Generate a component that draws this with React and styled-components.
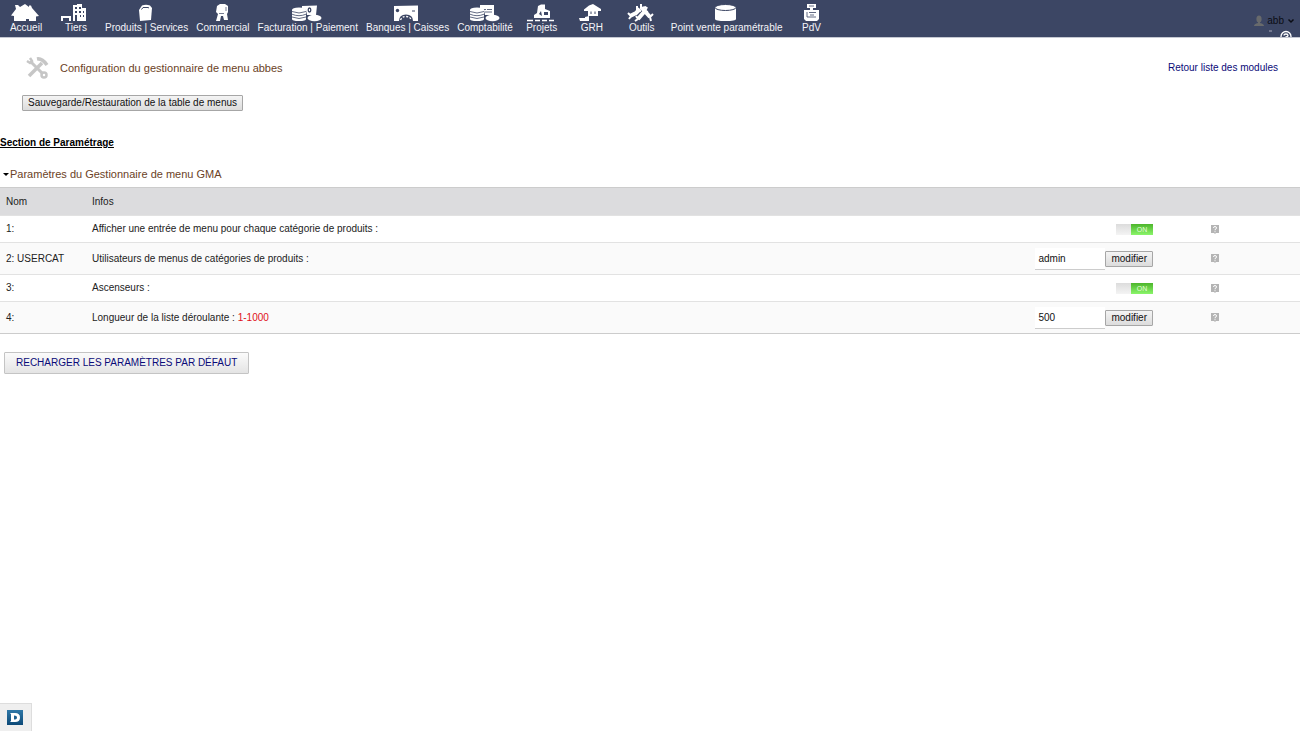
import React from "react";
import styled, { createGlobalStyle } from "styled-components";

const Global = createGlobalStyle`
  *, *::before, *::after { box-sizing: border-box; }
  body {
    margin: 0;
    background: #fff;
    color: #222;
    font: 10px/14px "Liberation Sans", Arial, sans-serif;
  }
  button, input { font: inherit; color: inherit; }
`;

const TopBar = styled.header`
  display: flex;
  justify-content: space-between;
  height: 38px;
  background: #3c4664;
  border-bottom: 1px solid #c5c8d2;
  overflow: hidden;
`;
const Nav = styled.nav`
  display: flex;
  padding: 3px 0 0 1px;
`;
const NavLink = styled.a`
  display: flex;
  flex-direction: column;
  align-items: center;
  min-width: 50px;
  padding: 0 4px;
  color: #f4f4f8;
  text-decoration: none;
  white-space: nowrap;
`;
const NavIcon = styled.svg`
  width: 30px;
  height: 18px;
  fill: #fff;
  overflow: visible;
`;
const Account = styled.div`
  display: flex;
  flex-direction: column;
  align-items: flex-end;
  padding: 14px 5px 0 0;
`;
const UserButton = styled.button`
  display: flex;
  align-items: center;
  gap: 3px;
  padding: 0;
  border: 0;
  background: none;
  color: #0b0d14;
`;
const HelpLine = styled.a`
  display: flex;
  padding: 2px 3px 0 0;
`;

const PageHead = styled.div`
  display: flex;
  align-items: center;
  justify-content: space-between;
  padding: 18px 22px 0 25px;
`;
const Title = styled.h1`
  display: flex;
  align-items: center;
  gap: 11px;
  margin: 0;
  font-size: 11px;
  font-weight: normal;
  color: #6b4226;
`;
const TextLink = styled.a`
  color: #0a0a78;
  text-decoration: none;
`;
const Actions = styled.div`
  padding: 15px 22px 0;
`;
const Button = styled.button`
  display: block;
  height: 16px;
  padding: 0 5px;
  border: 1px solid #a6a6a6;
  border-radius: 1px;
  background: linear-gradient(#f4f4f4, #dcdcdc);
  color: #111;
  line-height: 14px;
  white-space: nowrap;
`;
const Section = styled.h2`
  margin: 25px 0 0;
  font-size: 10px;
  color: #000;
  text-decoration: underline;
`;
const Details = styled.details`
  margin-top: 17px;
`;
const Summary = styled.summary`
  display: flex;
  align-items: center;
  gap: 1px;
  padding-left: 3px;
  font-size: 11px;
  color: #6b4226;
  list-style: none;
`;
const Table = styled.table`
  width: 100%;
  margin-top: 6px;
  border-collapse: collapse;
  table-layout: fixed;
  border-top: 1px solid #ccc;
  border-bottom: 1px solid #ccc;
`;
const Col = styled.col`
  width: ${(p) => p.$w};
`;
const HeadCell = styled.th`
  height: 28px;
  padding: 0 6px;
  background: #dcdcde;
  font-weight: normal;
  text-align: left;
`;
const Row = styled.tr`
  height: ${(p) => (p.$tall ? 32 : 27)}px;
  background: ${(p) => (p.$tall ? "#fafafa" : "#fff")};
  border-top: 1px solid #e2e2e2;
`;
const Cell = styled.td`
  padding: 0 6px;
`;
const HelpCell = styled.td`
  padding: 0 30px 0 0;
  line-height: 0;
  text-align: center;
`;
const Range = styled.span`
  color: #e01020;
`;
const Control = styled.div`
  display: flex;
  justify-content: flex-end;
  align-items: center;
`;
const Field = styled.input`
  width: 70px;
  height: 22px;
  padding: 0 3px;
  border: 0;
  border-bottom: 1px solid #ccc;
  background: #fff;
  color: #111;
  outline: 0;
`;
const Toggle = styled.label`
  position: relative;
  display: flex;
  width: 37px;
  height: 11px;
  background: linear-gradient(#dcdcdc, #f4f4f4);
  justify-content: flex-end;
`;
const ToggleInput = styled.input`
  position: absolute;
  inset: 0;
  margin: 0;
  opacity: 0;
`;
const ToggleOn = styled.span`
  width: 22px;
  background: linear-gradient(#4db52c, #8af56a);
  color: #e4ffdc;
  font-size: 7px;
  line-height: 12px;
  text-align: center;
`;
const ReloadLink = styled.a`
  display: inline-block;
  margin: 18px 4px;
  padding: 3px 11px;
  border: 1px solid #c4c4c4;
  border-radius: 1px;
  background: linear-gradient(#fbfbfb, #e4e4e4);
  color: #0a0a78;
  text-decoration: none;
`;
const DebugBar = styled.a`
  position: fixed;
  left: 0;
  bottom: 0;
  display: flex;
  align-items: center;
  width: 32px;
  height: 28px;
  padding-left: 7px;
  background: #efefef;
  border-top: 1px solid #ddd;
  border-right: 1px solid #ddd;
`;
const Logo = styled.span`
  display: flex;
  width: 16px;
  height: 15px;
  align-items: center;
  justify-content: center;
  background: linear-gradient(#2f78a8, #0d4a78);
`;

const BAR = "#3c4664";
const Coins = () => (
  <>
    <path d="M0 7Q0 4.500 7 4.500T14 7V16Q14 18 7 18T0 16Z" />
    <path d="M0 8.500Q7 11.500 14 8.500M0 11.200Q7 14.200 14 11.200M0 14Q7 17 14 14" fill="none" stroke={BAR} strokeWidth=".8" />
    <ellipse cx="22.500" cy="15" rx="7" ry="3.200" />
  </>
);
const ICONS = {
  home: <path d="M0 12.500 5 6 4 2H7L9 4 14 1 18 4V2.500H20L21 5 28 13 25 13.500V18H18V16H15V18H3V13Z" />,
  company: (
    <>
      <path d="M12 2H16V1H21V5H25V18H12ZM0 13H10V18H8V15H2V18H0Z" />
      <path d="M14 4H16V6H14ZM18 4H20V6H18ZM14 8H16V10H14ZM18 8H20V10H18ZM22 8H23V10H22ZM14 12H16V18H14ZM19 12H20V14H19ZM22 12H23V14H22Z" fill={BAR} />
    </>
  ),
  product: (
    <>
      <path d="M7 7 10 2.500Q14 1 18 2.500L20 5 19 17 8 18Z" />
      <path d="M9.500 6.500 11 4.500H16L17 5" fill="none" stroke={BAR} strokeWidth="1" />
    </>
  ),
  commercial: (
    <>
      <path d="M9 3 12 1H17L20 3V9L19 11 20 17H16L15 13H13L12 18H8L10 11 8 9Z" />
      <path d="M11 10.500H16M18 4V8" stroke={BAR} strokeWidth=".7" />
    </>
  ),
  billing: (
    <g transform="translate(-1 0)">
      <Coins />
      <path d="M10 3 25 2.500 24 12H15L14 7 10 5Z" />
      <ellipse cx="17.500" cy="7" rx="1.300" ry="2" fill="none" stroke={BAR} strokeWidth="1.300" />
    </g>
  ),
  bank: (
    <>
      <path d="M1 3 25 2.500V18H1Z" />
      <path d="M6 18Q6 11.500 13 11.500T20 18Z" fill={BAR} />
      <path d="M7.500 17Q9 13.500 13 13.500T18.500 17" fill="none" stroke="#fff" strokeWidth="1.300" strokeDasharray="2 1.500" />
      <circle cx="4.500" cy="7.500" r="1.700" fill={BAR} />
      <path d="M19 8H22" stroke={BAR} />
    </>
  ),
  accounting: (
    <>
      <Coins />
      <path d="M10 2H24V12H15L14 7 10 6Z" />
      <path d="M14 6.500H16M17 6.500H22M15 9H22" stroke={BAR} strokeWidth=".8" />
    </>
  ),
  project: (
    <>
      <path d="M11 3 14 1.500H18V6L23 8V15H7V12L10 10Z" />
      <path d="M17 9H21V12H17ZM12 11 14 8 15 13" fill={BAR} />
      <path d="M0 17.500H6M8 17.500H13M15 17.500H20M22 17.500H27" stroke="#fff" strokeWidth="1.300" />
    </>
  ),
  hr: (
    <>
      <path d="M7 6.500 12 2.500 16 1 24 6V8H21V13H11V8H7ZM2 15H8V14L12 13V18H3Z" />
      <path d="M14 8.500V11M18 8.500V11" stroke={BAR} />
    </>
  ),
  tools: (
    <g fill="none" stroke="#fff">
      <path d="M3 13 9 10 13 6M11 16 17 9M15 5 23 14" strokeWidth="4" />
      <path d="M1 10 4 13 2 16M10 3 10 7 14 8M14 1 14 5 19 4M20 4 18 8 21 9M26 11 23 14 24 18M9 13 11 16 8 18" strokeWidth="2" />
    </g>
  ),
  pos: (
    <>
      <path d="M3 5V16Q3 18 13.500 18T24 16V5Z" />
      <ellipse cx="13.500" cy="4.500" rx="10.500" ry="3" stroke={BAR} strokeWidth="1" />
    </>
  ),
  register: (
    <>
      <path d="M10 1H19V5H16V7H22V16L20 18H9L7 16V7H13V5H10Z" />
      <path d="M12 3H17M10 9V14H19M12 9.500H19M13 12H17" fill="none" stroke={BAR} strokeWidth=".8" />
    </>
  ),
};

const MENU = [
  ["Accueil", "home"],
  ["Tiers", "company"],
  ["Produits | Services", "product"],
  ["Commercial", "commercial"],
  ["Facturation | Paiement", "billing"],
  ["Banques | Caisses", "bank"],
  ["Comptabilité", "accounting"],
  ["Projets", "project"],
  ["GRH", "hr"],
  ["Outils", "tools"],
  ["Point vente paramétrable", "pos"],
  ["PdV", "register"],
];

const ROWS = [
  { name: "1:", info: "Afficher une entrée de menu pour chaque catégorie de produits :" },
  { name: "2: USERCAT", info: "Utilisateurs de menus de catégories de produits :", value: "admin" },
  { name: "3:", info: "Ascenseurs :" },
  { name: "4:", info: "Longueur de la liste déroulante :", range: "1-1000", value: "500" },
];

const UserIcon = () => (
  <svg width="10" height="12" viewBox="0 0 10 12" fill="#686a6c" aria-hidden="true">
    <ellipse cx="5" cy="4" rx="2.600" ry="3.500" />
    <path d="M0 11Q0 9 4 8V6H6V8Q10 9 10 11Z" />
  </svg>
);

const ToolsIcon = () => (
  <svg width="24" height="24" viewBox="0 0 24 24" fill="none" stroke="#c6c6c6" aria-hidden="true">
    <path d="M6 6 18 18" strokeWidth="3" />
    <path d="M5 2 7 5 5 7 2 5" strokeWidth="2.500" />
    <circle cx="19" cy="19" r="2.500" strokeWidth="2.500" />
    <path d="M4 20 17 7" strokeWidth="3.500" />
    <path d="M12 3Q17 2 22 9" strokeWidth="3.500" />
  </svg>
);

const HelpIcon = () => (
  <svg width="8" height="9" viewBox="0 0 8 9" role="img" aria-label="Aide">
    <path d="M0 0H8V8H5L4 9 3 8H0Z" fill="#b4b4b4" />
    <path d="M2.500 3Q2.500 1.500 4 1.500T5.500 3Q5.500 4 4 4.500V5.300M4 6.200V7.200" fill="none" stroke="#fff" />
  </svg>
);

export default function App() {
  return (
    <>
      <Global />
      <TopBar>
        <Nav>
          {MENU.map(([label, icon]) => (
            <NavLink href="#" key={label}>
              <NavIcon viewBox="0 0 30 18" aria-hidden="true">{ICONS[icon]}</NavIcon>
              {label}
            </NavLink>
          ))}
        </Nav>
        <Account>
          <UserButton type="button">
            <UserIcon />
            abb
            <svg width="8" height="6" viewBox="0 0 8 6" fill="none" stroke="#0b0d14" strokeWidth="1.500" aria-hidden="true">
              <path d="M1.500 1.500 4 4 6.500 1.500" />
            </svg>
          </UserButton>
          <HelpLine href="#" aria-label="Aide">
            <svg width="24" height="12" viewBox="0 0 24 12" fill="none" stroke="#fff" aria-hidden="true">
              <path d="M1 1H4" stroke="#aab" />
              <circle cx="18" cy="6.500" r="5" strokeWidth="1.300" />
              <path d="M16 5.500Q16 4 18 4T20 5.500Q20 6.500 18 7V8" strokeWidth="1.300" />
            </svg>
          </HelpLine>
        </Account>
      </TopBar>
      <main>
        <PageHead>
          <Title>
            <ToolsIcon />
            Configuration du gestionnaire de menu abbes
          </Title>
          <TextLink href="#">Retour liste des modules</TextLink>
        </PageHead>
        <Actions>
          <Button type="button">Sauvegarde/Restauration de la table de menus</Button>
        </Actions>
        <Section>Section de Paramétrage</Section>
        <Details open>
          <Summary>
            <svg width="6" height="4" viewBox="0 0 6 4" aria-hidden="true">
              <path d="M0 1H6L3 4Z" fill="#000" />
            </svg>
            Paramètres du Gestionnaire de menu GMA
          </Summary>
          <Table>
            <colgroup>
              <Col $w="86px" />
              <Col />
              <Col $w="160px" />
              <Col $w="141px" />
            </colgroup>
            <thead>
              <tr>
                <HeadCell>Nom</HeadCell>
                <HeadCell>Infos</HeadCell>
                <HeadCell />
                <HeadCell />
              </tr>
            </thead>
            <tbody>
              {ROWS.map((row) => (
                <Row key={row.name} $tall={row.value !== undefined}>
                  <Cell>{row.name}</Cell>
                  <Cell>
                    {row.info} {row.range && <Range>{row.range}</Range>}
                  </Cell>
                  <Cell>
                    <Control>
                      {row.value !== undefined ? (
                        <>
                          <Field type="text" defaultValue={row.value} aria-label={row.info} />
                          <Button type="button">modifier</Button>
                        </>
                      ) : (
                        <Toggle>
                          <ToggleInput type="checkbox" defaultChecked aria-label={row.info} />
                          <ToggleOn>ON</ToggleOn>
                        </Toggle>
                      )}
                    </Control>
                  </Cell>
                  <HelpCell>
                    <HelpIcon />
                  </HelpCell>
                </Row>
              ))}
            </tbody>
          </Table>
        </Details>
        <ReloadLink href="#">RECHARGER LES PARAMÈTRES PAR DÉFAUT</ReloadLink>
      </main>
      <DebugBar href="#" aria-label="Debug">
        <Logo>
          <svg width="12" height="11" viewBox="0 0 12 11" aria-hidden="true">
            <path d="M1 1H6Q11 1 11 5.500T6 10H1L2 9V2Z" fill="#fff" />
            <path d="M5 3.500Q8 3.500 8 5.500T5 7.500Z" fill="#1d6090" />
          </svg>
        </Logo>
      </DebugBar>
    </>
  );
}
